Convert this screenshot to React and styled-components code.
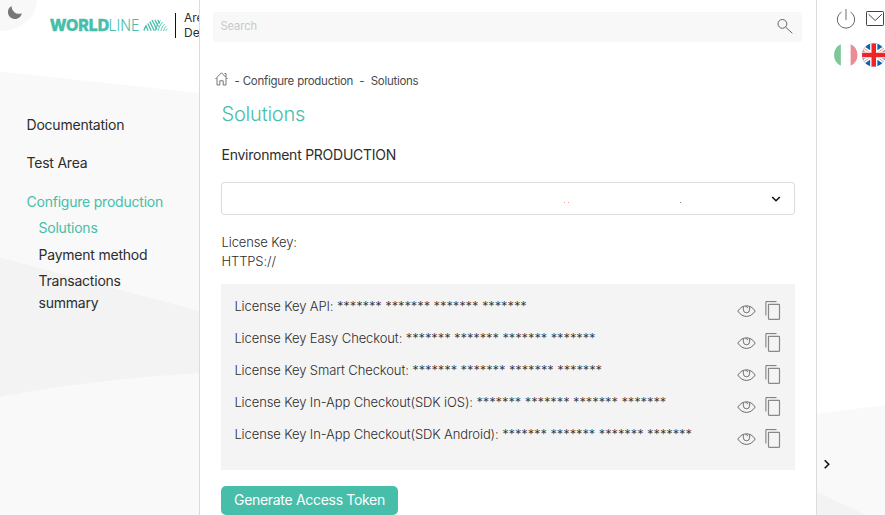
import React from 'react';
import styled, { createGlobalStyle } from 'styled-components';

const GlobalStyle = createGlobalStyle`
  * { box-sizing: border-box; }
  body { margin: 0; background: #fff; overflow: hidden; }
  button, input { font: inherit; }
`;

const Page = styled.div`
  display: grid;
  grid-template-columns: 200px 616px 69px;
  width: 885px;
  height: 515px;
  overflow: hidden;
  font-family: Inter, 'Liberation Sans', sans-serif;
  color: #2d2d2d;
`;

const Sidebar = styled.aside`
  position: relative;
  border-right: 1px solid #dcdcdc;
  overflow: hidden;
`;

const Backdrop = styled.svg`
  position: absolute;
  inset: 0;
  z-index: 0;
`;

const Brand = styled.header`
  position: relative;
  display: flex;
  align-items: flex-start;
  height: 114px;
  padding-top: 10px;
  padding-left: 50px;
`;

const ThemeToggle = styled.svg`
  position: absolute;
  left: 7px;
  top: 5px;
`;

const LogoMark = styled.svg`
  flex: none;
  margin-top: 5px;
`;

const Divider = styled.span`
  flex: none;
  width: 1px;
  height: 25px;
  margin: 3px 8px 0 7px;
  background: #111;
`;

const AreaName = styled.div`
  flex: none;
  width: 80px;
  margin-top: 1px;
  font-size: 12px;
  line-height: 14.5px;
`;

const Nav = styled.nav`
  position: relative;
  display: flex;
  flex-direction: column;
  gap: 16.4px;
  padding-left: 26.5px;
`;

const NavItem = styled.a`
  font-size: 14px;
  line-height: 22px;
  letter-spacing: -0.22px;
  color: ${(p) => (p.$active ? '#46beaa' : '#2d2d2d')};
`;

const SubNav = styled.div`
  display: flex;
  flex-direction: column;
  gap: 4.75px;
  width: 130px;
  margin-top: -12.4px;
  padding-left: 12px;
`;

const Main = styled.main`
  padding: 12px 14px 0 13px;
`;

const SearchBar = styled.label`
  display: flex;
  align-items: center;
  height: 30px;
  padding: 0 9px 0 7.5px;
  border-radius: 3px;
  background: #f8f8f8;
`;

const SearchInput = styled.input`
  flex: 1;
  height: 28px;
  padding: 0 0 2px;
  border: 0;
  outline: 0;
  background: transparent;
  font-size: 11.2px;
  letter-spacing: -0.1px;
  &::placeholder { color: #c9c9c9; opacity: 1; }
`;

const Breadcrumb = styled.div`
  display: flex;
  height: 20px;
  margin-top: 29px;
  padding-left: 2px;
  font-size: 11.5px;
  line-height: 21px;
  letter-spacing: -0.28px;
  word-spacing: 0.2px;
  color: #4a4a4a;
  white-space: pre;
`;

const HomeIcon = styled.svg`
  margin: 1px 6.5px 0 0;
`;

const Content = styled.section`
  padding: 0 7px 0 8px;
`;

const Title = styled.h1`
  margin: 10px 0 0;
  font-size: 20px;
  font-weight: 300;
  line-height: 26px;
  letter-spacing: -0.2px;
  text-indent: 0.5px;
  color: #46beaa;
`;

const Environment = styled.h2`
  margin: 17px 0 0;
  font-size: 14px;
  font-weight: 400;
  line-height: 22px;
  letter-spacing: -0.25px;
  text-indent: 0.5px;
`;

const Select = styled.button`
  display: flex;
  align-items: center;
  justify-content: flex-end;
  width: 574px;
  height: 33px;
  margin-top: 16px;
  padding: 0 13px 0 0;
  border: 1px solid #dcdcdc;
  border-radius: 3px;
  background: #fff;
`;

const LicenseInfo = styled.p`
  margin: 18px 0 0;
  padding-left: 0.5px;
  font-size: 13px;
  font-weight: 300;
  line-height: 19px;
  letter-spacing: -0.12px;
`;

const KeyPanel = styled.div`
  height: 186px;
  margin-top: 13px;
  padding: 7px 14px 0 13.4px;
  background: #f4f4f4;
`;

const KeyRow = styled.div`
  display: flex;
  height: 32px;
  font-size: 13px;
  font-weight: 300;
  line-height: 30px;
  letter-spacing: -0.11px;
`;

const KeyText = styled.span`
  flex: 1;
  white-space: nowrap;
`;

const KeyActions = styled.span`
  display: flex;
  gap: 9px;
  padding-top: 10px;
`;

const PrimaryButton = styled.button`
  display: flex;
  align-items: flex-start;
  justify-content: center;
  width: 177px;
  height: 29px;
  margin-top: 16px;
  padding: 0;
  border: 0;
  border-radius: 5px;
  background: #46beaa;
  color: #fff;
  font-size: 14px;
  line-height: 28px;
  letter-spacing: -0.31px;
  white-space: nowrap;
`;

const Rail = styled.aside`
  position: relative;
  border-left: 1px solid #dcdcdc;
  overflow: hidden;
`;

const RailIcons = styled.div`
  position: relative;
  display: flex;
  gap: ${(p) => p.$gap};
  padding: ${(p) => p.$pad};
`;

const Expand = styled.svg`
  position: absolute;
  left: 5px;
  top: 458px;
`;

const KEYS = ['API', 'Easy Checkout', 'Smart Checkout', 'In-App Checkout(SDK iOS)', 'In-App Checkout(SDK Android)'];

function Logo() {
  return (
    <LogoMark width="118" height="22" viewBox="0 -3 118 22" fill="#46beaa">
      <text x="-0.3" y="13" fontSize="16" fontWeight="800" textLength="59.5" lengthAdjust="spacingAndGlyphs" stroke="#46beaa" strokeWidth="0.4">WORLD</text>
      <text x="58.5" y="13" fontSize="16" fontWeight="300" textLength="31" lengthAdjust="spacingAndGlyphs">LINE</text>
      <g fill="none" stroke="#46beaa">
        <path strokeWidth="1.3" d="M94 12.800C94.200 10.800 94.800 9.300 96 7.800L98 12.800M97.800 5.500 101.200 12.800M99.800 3.600 104.300 12.800M102 2 107 11.800M104.900 1.800 108.500 8.800M107.800 1.800 109.800 5.500" />
        <path strokeWidth="0.9" d="M105 12.800C106.200 8.500 108 4.800 110.600 2.400M108 12.800C109 9.200 110.600 6.200 112.700 4M110.900 12.800C111.600 10 112.900 7.800 114.600 6M113.500 12.800C114 11 114.900 9.500 116.100 8.300M115.800 12.800 117.200 10.700" />
      </g>
    </LogoMark>
  );
}

function Eye() {
  return (
    <svg width="19" height="20" viewBox="0 0.6 19 20" fill="none" stroke="#555" strokeWidth="0.85">
      <path d="M0.800 10.700C3.300 7 6.200 5.400 9.500 5.400S15.700 7 18.200 10.700C15.700 14.300 12.800 16 9.500 16S3.300 14.300 0.800 10.700Z" />
      <path d="M6.300 6.500V8.900A3.200 3.500 0 0 0 12.700 8.900V6.500" />
      <path d="M8.500 6.500C9.500 6 10.700 6.600 10.800 7.800" />
    </svg>
  );
}

function Copy() {
  return (
    <svg width="16" height="19" viewBox="0 0 16 19" fill="none" stroke="#777" strokeWidth="1">
      <path d="M0.900 14.500V0.600H11.500" />
      <rect x="3.500" y="3.300" width="11" height="15" rx="0.500" strokeWidth="1.200" stroke="#888" />
    </svg>
  );
}

export default function App() {
  return (
    <>
      <GlobalStyle />
      <Page>
        <Sidebar>
          <Backdrop width="199" height="515" viewBox="0 0 199 515">
            <path d="M0 0H37A37 31 0 0 1 0 31Z" fill="#f8f8f8" />
            <path d="M0 71.500 199 93V515H0Z" fill="#f9f9f9" />
            <path d="M0 257.500 199 311V373Q88 380 0 397Z" fill="#f3f3f3" />
          </Backdrop>
          <Brand>
            <ThemeToggle width="16" height="16" viewBox="0 0 16 16">
              <path d="M4.600 0.900A7 7 0 1 0 14.800 8.300A7.500 7.500 0 0 1 4.600 0.900Z" fill="#777" />
            </ThemeToggle>
            <Logo />
            <Divider />
            <AreaName>Area<br />Developers</AreaName>
          </Brand>
          <Nav>
            <NavItem>Documentation</NavItem>
            <NavItem>Test Area</NavItem>
            <NavItem $active>Configure production</NavItem>
            <SubNav>
              <NavItem $active>Solutions</NavItem>
              <NavItem>Payment method</NavItem>
              <NavItem>Transactions<br />summary</NavItem>
            </SubNav>
          </Nav>
        </Sidebar>

        <Main>
          <SearchBar>
            <SearchInput placeholder="Search" />
            <svg width="16" height="16" viewBox="0 0 16 16" fill="none" stroke="#555" strokeWidth="0.900">
              <circle cx="5.400" cy="4.900" r="4.400" />
              <path d="M8.600 8.100 15.300 14.200" />
            </svg>
          </SearchBar>
          <Breadcrumb>
            <HomeIcon width="13" height="14" viewBox="0 0 13 14" fill="none" stroke="#666" strokeWidth="0.900">
              <path d="M0.400 7 6.500 0.800 12.600 7M2 6V13H4.800V8.800H8.200V13H11V6M9.500 1.500H11V5" />
            </HomeIcon>
            {'- Configure production  -  Solutions'}
          </Breadcrumb>
          <Content>
            <Title>Solutions</Title>
            <Environment>Environment PRODUCTION</Environment>
            <Select aria-label="Solution">
              <svg width="230" height="10" viewBox="0 0 230 10">
                <path fill="#e8a090" d="M13 8h1v1h-1zM17 8h1v1h-1z" />
                <path fill="#8a80c0" d="M129 8h1v1h-1z" />
                <path d="M221.200 3 225 6.700 228.800 3" fill="none" stroke="#111" strokeWidth="1.600" />
              </svg>
            </Select>
            <LicenseInfo>License Key:<br />HTTPS://</LicenseInfo>
            <KeyPanel>
              {KEYS.map((name) => (
                <KeyRow key={name}>
                  <KeyText>License Key {name}: ******* ******* ******* *******</KeyText>
                  <KeyActions><Eye /><Copy /></KeyActions>
                </KeyRow>
              ))}
            </KeyPanel>
            <PrimaryButton>Generate Access Token</PrimaryButton>
          </Content>
        </Main>

        <Rail>
          <Backdrop width="68" height="515" viewBox="0 0 68 515">
            <path d="M0 414 68 405V515H0Z" fill="#f9f9f9" />
            <path d="M0 492 49 515H0Z" fill="#f3f3f3" />
          </Backdrop>
          <RailIcons $gap="10px" $pad="9px 0 0 19px">
            <svg width="20" height="20" viewBox="0 0 20 20" fill="none" stroke="#555" strokeWidth="0.900">
              <path d="M5.500 3A8.700 8.700 0 1 0 14.500 3" />
              <path d="M10 0V11" stroke="#999" strokeWidth="1.400" />
            </svg>
            <svg width="19" height="20" viewBox="0 0 19 20" fill="none" stroke="#444" strokeWidth="1">
              <rect x="0.500" y="2.500" width="17" height="14" rx="0.700" />
              <path d="M2.600 5.300 9.200 11.500 15.800 5.300" />
            </svg>
          </RailIcons>
          <RailIcons $gap="4px" $pad="14px 0 0 17px">
            <svg width="24" height="24" viewBox="0 0 24 24" opacity="0.550">
              <path d="M7 1.100A12 12 0 0 0 7 22.900Z" fill="#149a48" />
              <path d="M17 1.100A12 12 0 0 1 17 22.900Z" fill="#d9303c" />
            </svg>
            <svg width="24" height="24" viewBox="0 0 24 24">
              <defs><clipPath id="round"><circle cx="12" cy="12" r="12" /></clipPath></defs>
              <g clipPath="url(#round)">
                <path fill="#1261ae" d="M0 0H24V24H0Z" />
                <path stroke="#fff" strokeWidth="3.800" d="M0 4 24 20M24 4 0 20" />
                <path stroke="#e77" strokeWidth="0.800" d="M0 4 24 20M24 4 0 20" />
                <path stroke="#fff" strokeWidth="7.400" d="M12 0V24M0 12H24" />
                <path stroke="#ee2427" strokeWidth="4.600" d="M12 0V24M0 12H24" />
              </g>
            </svg>
          </RailIcons>
          <Expand width="10" height="12" viewBox="0 0 10 12" fill="none" stroke="#111" strokeWidth="1.600">
            <path d="M2.700 2.300 6.700 6.300 2.700 10.300" />
          </Expand>
        </Rail>
      </Page>
    </>
  );
}
